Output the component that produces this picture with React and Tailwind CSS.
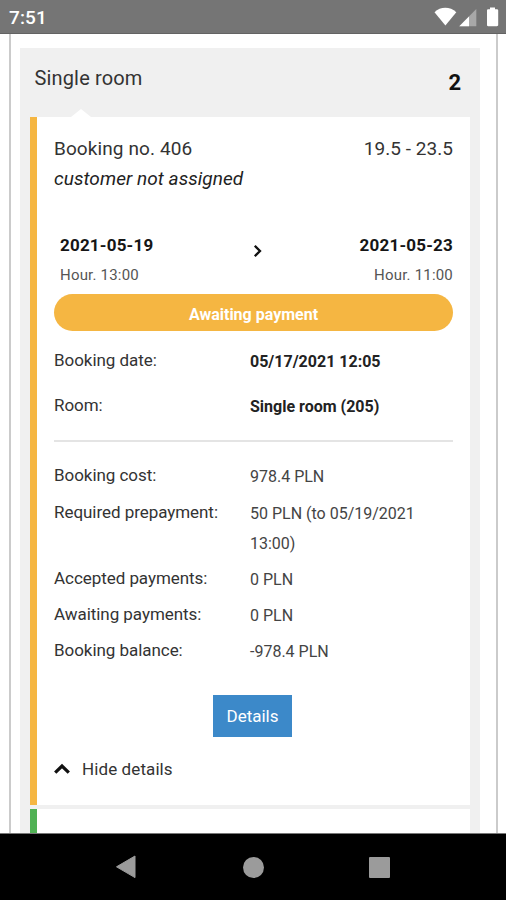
const booking = {
  number: 'Booking no. 406',
  range: '19.5 - 23.5',
  customer: 'customer not assigned',
  from: { date: '2021-05-19', hour: 'Hour. 13:00' },
  to: { date: '2021-05-23', hour: 'Hour. 11:00' },
  status: 'Awaiting payment',
};

const info = [
  { label: 'Booking date:', value: '05/17/2021 12:05' },
  { label: 'Room:', value: 'Single room (205)' },
];

const payments = [
  { label: 'Booking cost:', value: '978.4 PLN' },
  { label: 'Required prepayment:', value: '50 PLN (to 05/19/2021 13:00)' },
  { label: 'Accepted payments:', value: '0 PLN' },
  { label: 'Awaiting payments:', value: '0 PLN' },
  { label: 'Booking balance:', value: '-978.4 PLN' },
];

function StatusBar() {
  return (
    <header className="flex h-[34px] shrink-0 items-center justify-between border-b border-[#636363] bg-[#757575] pr-[7px] pl-[9px]">
      <span className="pt-[2px] text-[19px] leading-none font-medium tracking-[0.1px] text-white">7:51</span>
      <svg width="65" height="20" viewBox="0 0 65 20" className="mt-px">
        <path d="M0.5 5.2C6.5 -0.6 16 -0.6 22.3 5.2L11.4 18.4Z" fill="#fff" />
        <path d="M42.3 2V19.2H25.3Z" fill="#a8a8a8" />
        <path d="M35 9.4V19.2H25.3Z" fill="#fff" />
        <path d="M56 0.6H61V2.2H62.8C63.8 2.2 64.2 2.8 64.2 3.6V17.8C64.2 18.8 63.8 19.2 62.8 19.2H54.2C53.3 19.2 53 18.8 53 17.8V3.6C53 2.8 53.3 2.2 54.2 2.2H56Z" fill="#fff" />
      </svg>
    </header>
  );
}

function NavBar() {
  return (
    <footer className="grid h-[67px] shrink-0 grid-cols-3 border-t border-[#777] bg-black px-[63px]">
      <div className="flex items-center justify-center">
        <svg width="22" height="24" viewBox="0 0 22 24">
          <path d="M1.5 11.8L20 1V22.6Z" fill="#9b9b9b" stroke="#9b9b9b" strokeLinejoin="round" />
        </svg>
      </div>
      <div className="flex items-center justify-center pl-[2px]">
        <div className="h-[21px] w-[21px] rounded-full bg-[#9b9b9b]" />
      </div>
      <div className="flex items-center justify-center">
        <div className="h-[21px] w-[21px] rounded-[1px] bg-[#9b9b9b]" />
      </div>
    </footer>
  );
}

function Stay({ date, hour }) {
  return (
    <div>
      <p className="text-[17px] leading-[30px] font-bold tracking-[0.2px] text-[#161616]">{date}</p>
      <p className="text-[15px] leading-[30px] tracking-[0.2px] text-[#555]">{hour}</p>
    </div>
  );
}

export default function App() {
  return (
    <div className="flex h-[900px] w-[506px] flex-col overflow-hidden bg-white font-['Roboto',sans-serif] text-[#333]">
      <StatusBar />

      <main className="mr-[8px] ml-[9px] min-h-0 flex-1 overflow-hidden border-x-2 border-[#cbcbcb] px-[9px] pt-[14px]">
        <section className="mr-[7px] h-[900px] bg-[#f0f0f0] px-[10px]">
          <div className="flex h-[60px] items-center justify-between pr-[9px] pl-[4.5px]">
            <h1 className="text-[20px] tracking-[0.15px]">Single room</h1>
            <span className="pt-[8px] text-[22px] font-bold text-[#111]">2</span>
          </div>
          <svg width="20" height="9" viewBox="0 0 20 9" className="ml-[41px]">
            <path d="M0 9L10 1L20 9Z" fill="#fff" />
          </svg>

          <article className="h-[688px] border-l-[7px] border-[#f5b642] bg-white px-[17px] pt-[17px]">
            <div className="flex justify-between text-[19px] leading-[30px]">
              <span className="tracking-[0.1px]">{booking.number}</span>
              <span className="tracking-[0.05px]">{booking.range}</span>
            </div>
            <p className="text-[19px] leading-[30px] tracking-[0.05px] text-[#222] italic">{booking.customer}</p>

            <div className="mt-[36px] flex justify-between pl-[6px]">
              <Stay {...booking.from} />
              <svg width="10" height="14" viewBox="0 0 10 14" className="mt-[14px] ml-[3px]">
                <path d="M1.8 1.8L7 7L1.8 12.2" fill="none" stroke="#111" strokeWidth="2.3" />
              </svg>
              <div className="text-right">
                <Stay {...booking.to} />
              </div>
            </div>

            <div className="mt-[4px] flex h-[37px] items-center justify-center rounded-full bg-[#f5b642] pt-[4px] text-[16px] font-bold text-white">
              {booking.status}
            </div>

            <dl className="pt-[14px]">
              {info.map((row) => (
                <div key={row.label} className="flex h-[45px]">
                  <dt className="w-[196px] text-[17px] leading-[30px] tracking-[-0.05px]">{row.label}</dt>
                  <dd className="pt-[2px] text-[16px] leading-[30px] font-bold text-[#222]">{row.value}</dd>
                </div>
              ))}
            </dl>

            <hr className="mt-[5px] border-t-2 border-[#e4e4e4]" />

            <dl className="pt-[18.4px]">
              {payments.map((row) => (
                <div key={row.label} className="mb-[4.2px] flex">
                  <dt className="w-[196px] shrink-0 text-[17px] leading-[30px] tracking-[-0.05px]">{row.label}</dt>
                  <dd className="w-[180px] pt-[2px] text-[16px] leading-[30px] text-[#444]">{row.value}</dd>
                </div>
              ))}
            </dl>

            <button className="mt-[27.6px] ml-[159px] block h-[42px] w-[79px] bg-[#3c89c9] pt-[2px] text-[17px] text-white">Details</button>

            <div className="mt-[17px] flex items-center gap-[12px] text-[17px] leading-[30px] tracking-[0.1px]">
              <svg width="16" height="12" viewBox="0 0 16 12">
                <path d="M1.2 9.7L8 3L14.8 9.7" fill="none" stroke="#111" strokeWidth="3.2" />
              </svg>
              <span>Hide details</span>
            </div>
          </article>

          <article className="mt-[4px] h-[200px] border-l-[7px] border-[#50b154] bg-white" />
        </section>
      </main>

      <NavBar />
    </div>
  );
}
